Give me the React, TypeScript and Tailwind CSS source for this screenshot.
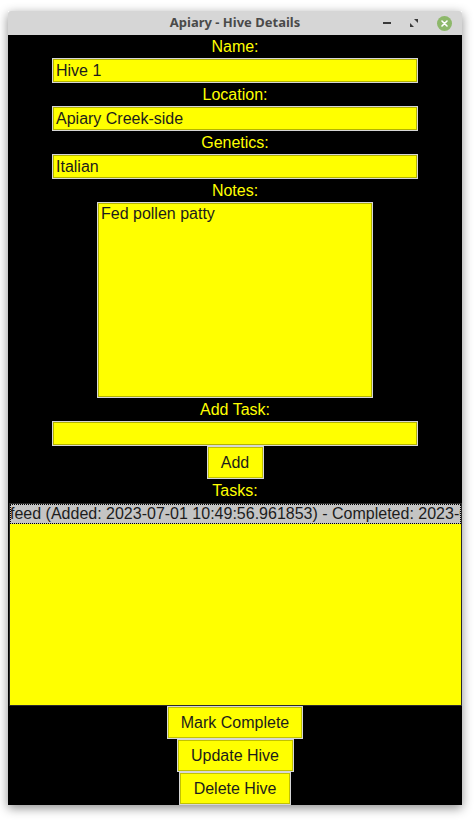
const font = { fontFamily: '"Liberation Sans", Arial, sans-serif' };

function Label({ text }: { text: string }) {
  return (
    <div className="h-[23px] text-[16px] leading-[23px] text-[#ffff00]" style={font}>
      {text}
    </div>
  );
}

function Entry({ value }: { value: string }) {
  return (
    <div className="w-[366px] h-[25px] border border-[#d6d6d6] bg-[#ffff00] shadow-[inset_0_0_0_1px_#b3b300] flex items-center px-[3px]">
      <span className="text-[16px] text-[#1c1c1c] leading-none" style={font}>{value}</span>
    </div>
  );
}

function Button({ text, width }: { text: string; width: string }) {
  return (
    <div
      className={`${width} h-[33px] border border-[#d6d6d6] bg-[#ffff00] shadow-[inset_0_0_0_1px_#c2c200] flex items-center justify-center text-[16px] text-[#1c1c1c]`}
      style={font}
    >
      {text}
    </div>
  );
}

export default function App() {
  return (
    <div className="w-[476px] h-[825px] bg-white pt-[11px] pl-[8px]">
      <div className="w-[454px] shadow-[0_3px_10px_rgba(0,0,0,0.45)]">
        {/* title bar */}
        <div className="relative h-[24px] bg-[#d6d6d6] rounded-t-[3px] flex items-center justify-center">
          <span
            className="text-[13px] font-bold text-[#4a4a4a]"
            style={{ fontFamily: '"Noto Sans", "DejaVu Sans", sans-serif' }}
          >
            Apiary - Hive Details
          </span>
          <div className="absolute right-[10px] top-0 h-full flex items-center gap-[18px]">
            <div className="w-[8px] h-[2px] bg-[#3a3a3a]" />
            <svg width="10" height="10" viewBox="0 0 10 10">
              <path d="M5 1 H9 V5 Z" fill="#3a3a3a" />
              <path d="M1 5 V9 H5 Z" fill="#3a3a3a" />
            </svg>
            <div className="w-[15px] h-[15px] rounded-full bg-[#8db86a] flex items-center justify-center">
              <svg width="7" height="7" viewBox="0 0 7 7">
                <path d="M1 1 L6 6 M6 1 L1 6" stroke="white" strokeWidth="1.6" strokeLinecap="round" />
              </svg>
            </div>
          </div>
        </div>

        {/* content */}
        <div className="h-[770px] bg-black flex flex-col items-center">
          <Label text="Name:" />
          <Entry value="Hive 1" />
          <Label text="Location:" />
          <Entry value="Apiary Creek-side" />
          <Label text="Genetics:" />
          <Entry value="Italian" />
          <Label text="Notes:" />
          <div className="w-[276px] h-[196px] border border-[#d6d6d6] bg-[#ffff00] shadow-[inset_0_0_0_1px_#b3b300] px-[3px] pt-[1px]">
            <div className="text-[16px] leading-[20px] text-[#1c1c1c]" style={font}>Fed pollen patty</div>
          </div>
          <Label text="Add Task:" />
          <Entry value="" />
          <Button text="Add" width="w-[57px]" />
          <Label text="Tasks:" />
          <div className="w-[453px] h-[203px] ml-[1px] mt-[1px] border border-[#2a2a2a] bg-[#ffff00] overflow-hidden">
            <div className="h-[20px] bg-[#c4c4c4] border border-dotted border-black flex items-center whitespace-nowrap overflow-hidden">
              <span className="text-[16px] text-[#1c1c1c] -ml-[1px]" style={font}>
                feed (Added: 2023-07-01 10:49:56.961853) - Completed: 2023-07-01 10:50:12.104522
              </span>
            </div>
          </div>
          <Button text="Mark Complete" width="w-[136px]" />
          <Button text="Update Hive" width="w-[117px]" />
          <Button text="Delete Hive" width="w-[112px]" />
        </div>
      </div>
    </div>
  );
}
